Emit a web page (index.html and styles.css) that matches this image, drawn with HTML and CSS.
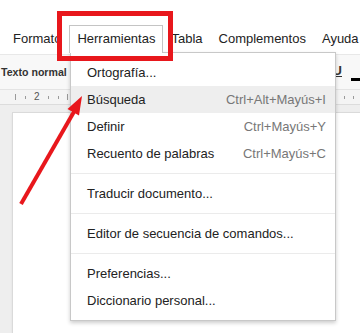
FILE: index.html
```html
<!DOCTYPE html>
<html lang="es">
<head>
<meta charset="utf-8">
<title>Herramientas</title>
<link rel="stylesheet" href="styles.css">
</head>
<body>
<div class="app">
  <header class="menubar">
    <div class="menu-item">Formato</div>
    <div class="menu-item active">Herramientas</div>
    <div class="menu-item">Tabla</div>
    <div class="menu-item">Complementos</div>
    <div class="menu-item">Ayuda</div>
  </header>
  <div class="toolbar">
    <span class="style-select">Texto normal</span>
    <span class="spacer"></span>
    <span class="tb-underline">U</span>
    <span class="tb-color"></span>
  </div>
  <div class="ruler">
    <div class="ruler-left">
      <span class="tick tall"></span>
      <span class="tick"></span>
      <span class="num">2</span>
      <span class="tick"></span>
      <span class="tick"></span>
      <span class="tick tall"></span>
    </div>
    <div class="ruler-right">
      <span class="tick"></span>
      <span class="tick"></span>
      <span class="tick"></span>
    </div>
  </div>
  <div class="canvas">
    <div class="page"></div>
  </div>

  <div class="dropdown">
    <div class="dd-item"><span>Ortografía...</span></div>
    <div class="dd-item hover"><span>Búsqueda</span><span class="sc">Ctrl+Alt+Mayús+I</span></div>
    <div class="dd-item"><span>Definir</span><span class="sc">Ctrl+Mayús+Y</span></div>
    <div class="dd-item"><span>Recuento de palabras</span><span class="sc">Ctrl+Mayús+C</span></div>
    <div class="dd-sep"></div>
    <div class="dd-item"><span>Traducir documento...</span></div>
    <div class="dd-sep"></div>
    <div class="dd-item"><span>Editor de secuencia de comandos...</span></div>
    <div class="dd-sep"></div>
    <div class="dd-item"><span>Preferencias...</span></div>
    <div class="dd-item"><span>Diccionario personal...</span></div>
  </div>

  <div class="annot-box"></div>
  <svg class="annot-arrow" width="360" height="333" viewBox="0 0 360 333">
    <line x1="21" y1="204" x2="75" y2="110" stroke="#e8171c" stroke-width="4" stroke-linecap="butt"/>
    <polygon points="82,96 67.5,109 79,115.5" fill="#e8171c"/>
  </svg>
</div>
</body>
</html>
```
FILE: styles.css
```css
* { box-sizing: border-box; }
html, body { margin: 0; padding: 0; }
body {
  width: 360px;
  height: 333px;
  overflow: hidden;
  font-family: "Liberation Sans", Arial, sans-serif;
  font-size: 13px;
  color: #222;
  background: #fff;
}
.app {
  position: relative;
  width: 360px;
  height: 333px;
  overflow: hidden;
  display: flex;
  flex-direction: column;
}

/* menu bar */
.menubar {
  height: 55px;
  flex: none;
  display: flex;
  align-items: flex-start;
  padding: 25px 0 0 5px;
  background: #fff;
  border-bottom: 1px solid #e8e8e8;
  white-space: nowrap;
}
.menu-item {
  padding: 5px 7px 7px;
  line-height: 15px;
  border: 1px solid transparent;
  border-bottom: none;
  color: #222;
}
.menu-item.active {
  position: relative;
  z-index: 3;
  background: #fff;
  border-color: #c4c4c4;
}

/* toolbar */
.toolbar {
  height: 34px;
  flex: none;
  display: flex;
  align-items: center;
  padding: 0 0 0 1px;
  background: #f8f8f8;
  white-space: nowrap;
}
.style-select {
  font-weight: bold;
  font-size: 10.6px;
  color: #333;
  margin-top: -1px;
}
.spacer { flex: 1; }
.tb-underline {
  font-weight: bold;
  font-size: 13px;
  color: #333;
  text-decoration: underline;
  margin-right: 9px;
  margin-top: -4px;
}
.tb-color {
  width: 9px;
  height: 3px;
  background: #000;
  margin-top: 14px;
}

/* ruler */
.ruler {
  height: 16px;
  flex: none;
  display: flex;
  justify-content: space-between;
  align-items: center;
  background: #f4f4f4;
  border-top: 1px solid #e4e4e4;
  border-bottom: 1px solid #dcdcdc;
}
.ruler-left, .ruler-right {
  display: flex;
  align-items: center;
  height: 100%;
}
.ruler-left { padding-left: 15px; gap: 8.5px; }
.ruler-right { padding-right: 6px; gap: 8px; }
.tick {
  width: 1px;
  height: 3px;
  background: #9a9a9a;
}
.tick.tall { height: 6px; }
.num {
  font-size: 10px;
  color: #555;
  line-height: 10px;
}

/* document canvas */
.canvas {
  flex: 1;
  background: #eeeeee;
  padding: 8px 0 0 13px;
}
.page {
  height: 100%;
  background: #fff;
  box-shadow: 0 0 0 1px #dadada, 0 1px 3px rgba(0,0,0,0.12);
}

/* dropdown menu (overlay) */
.dropdown {
  position: absolute;
  left: 70px;
  top: 52px;
  width: 266px;
  z-index: 2;
  background: #fff;
  border: 1px solid #c8c8c8;
  box-shadow: 0 2px 4px rgba(0,0,0,0.2);
  padding: 6px 0;
  white-space: nowrap;
}
.dd-item {
  display: flex;
  justify-content: space-between;
  padding: 6px 9px 6px 16px;
  line-height: 15px;
  color: #222;
}
.dd-item.hover { background: #eeeeee; }
.sc { color: #777; }
.dd-sep {
  border-top: 1px solid #ebebeb;
  margin: 6px 0;
}

/* annotations */
.annot-box {
  position: absolute;
  left: 57px;
  top: 11px;
  width: 116px;
  height: 50px;
  border: 5px solid #e8171c;
  z-index: 5;
}
.annot-arrow {
  position: absolute;
  left: 0;
  top: 0;
  z-index: 6;
  pointer-events: none;
}
```
